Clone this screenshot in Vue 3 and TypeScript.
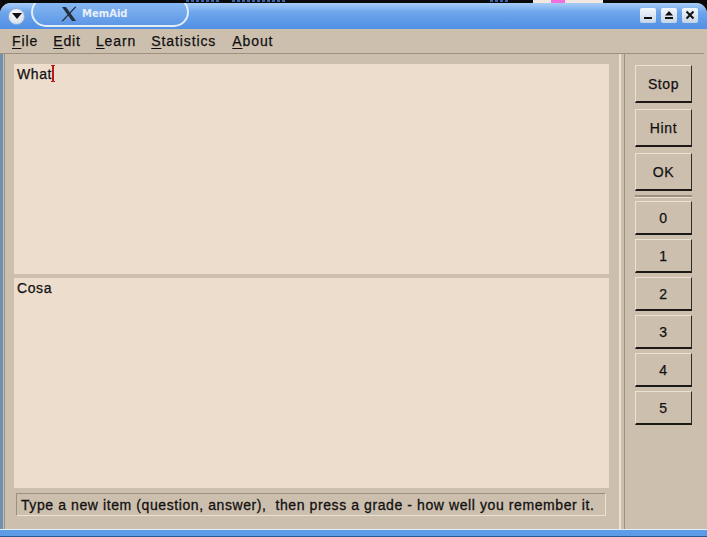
<script setup lang="ts">
const menus = [
  { key: "F", rest: "ile" },
  { key: "E", rest: "dit" },
  { key: "L", rest: "earn" },
  { key: "S", rest: "tatistics" },
  { key: "A", rest: "bout" },
];
const actions = ["Stop", "Hint", "OK"];
const grades = ["0", "1", "2", "3", "4", "5"];
</script>

<template>
  <div class="desktop">
    <div class="strip">
      <span class="strip-bits first"></span>
      <span class="strip-bits second"></span>
      <span class="strip-bits third"></span>
      <span class="strip-light"><i class="pink"></i></span>
    </div>
    <div class="window">
      <div class="titlebar">
        <button class="menu-ball">
          <svg viewBox="0 0 10 6" width="10" height="6"><path d="M0 0h10L5 6z" fill="#111" /></svg>
        </button>
        <div class="title-tab">
          <svg class="x-logo" viewBox="0 0 16 16" width="16" height="16">
            <path d="M1 1h4l10 14h-4z" fill="#26303c" />
            <path d="M14 1h1L2 15H1z" fill="#26303c" stroke="#26303c" stroke-width="0.7" />
          </svg>
          <span class="title-text">MemAid</span>
        </div>
        <div class="win-buttons">
          <button class="win-btn">
            <svg viewBox="0 0 10 10" width="10" height="10"><path d="M1 7h8v2H1z" fill="#111" /></svg>
          </button>
          <button class="win-btn">
            <svg viewBox="0 0 10 10" width="10" height="10"><path d="M5 1l4 4.5H1zM1 7h8v2H1z" fill="#111" /></svg>
          </button>
          <button class="win-btn">
            <svg viewBox="0 0 10 10" width="10" height="10"><path d="M1.5 1.5l7 7M8.5 1.5l-7 7" stroke="#111" stroke-width="2" /></svg>
          </button>
        </div>
      </div>

      <div class="menubar">
        <span v-for="m in menus" :key="m.key" class="menu-item"><u>{{ m.key }}</u>{{ m.rest }}</span>
      </div>

      <div class="body">
        <div class="main-panel">
          <div class="pane">What<span class="caret"></span></div>
          <div class="pane">Cosa</div>
          <div class="status">Type a new item (question, answer),&nbsp; then press a grade - how well you remember it.</div>
        </div>
        <div class="side-panel">
          <button v-for="a in actions" :key="a" class="btn action">{{ a }}</button>
          <div class="side-sep"></div>
          <button v-for="g in grades" :key="g" class="btn grade">{{ g }}</button>
        </div>
      </div>

      <div class="bottom-bar"></div>
    </div>
  </div>
</template>

<style scoped>
.desktop {
  position: relative;
  width: 707px;
  height: 537px;
  overflow: hidden;
  background: #0a0a0a;
  font-family: "Liberation Sans", Arial, sans-serif;
}

.strip {
  position: absolute;
  top: 0;
  left: 0;
  width: 707px;
  height: 4px;
  overflow: hidden;
}

.strip-bits {
  position: absolute;
  top: 0;
  height: 2px;
  background: repeating-linear-gradient(90deg, #3a62a8 0 3px, #0a0a0a 3px 5px);
}

.strip-bits.first { left: 186px; width: 34px; }
.strip-bits.second { left: 232px; width: 54px; }
.strip-bits.third { left: 490px; width: 20px; }

.strip-light {
  position: absolute;
  left: 533px;
  top: 0;
  width: 70px;
  height: 4px;
  background: #f0e8e0;
}

.pink {
  position: absolute;
  left: 18px;
  top: 0;
  width: 14px;
  height: 4px;
  background: #f070e0;
}

.window {
  position: absolute;
  top: 3px;
  left: 0;
  width: 707px;
  height: 534px;
  display: flex;
  flex-direction: column;
  background: #cdbfae;
  border-radius: 11px 11px 0 0;
  overflow: hidden;
}

.titlebar {
  height: 26px;
  flex-shrink: 0;
  display: flex;
  align-items: center;
  padding: 0 3px 0 8px;
  background: linear-gradient(#a7cdf6, #6ea5ec 35%, #4f8fe4);
}

.menu-ball {
  width: 17px;
  height: 17px;
  padding: 0;
  border: 1px solid #8fb0d8;
  border-radius: 50%;
  background: radial-gradient(circle at 40% 35%, #ffffff, #c8d4e4);
  display: flex;
  align-items: center;
  justify-content: center;
}

.title-tab {
  position: absolute;
  left: 31px;
  top: -6px;
  width: 158px;
  height: 30px;
  box-sizing: border-box;
  padding: 3px 0 0 28px;
  display: flex;
  align-items: center;
  gap: 5px;
  border: 2px solid #e4eefa;
  border-radius: 15px;
  background: linear-gradient(#8cbcf2, #5d97e6);
}

.x-logo {
  flex-shrink: 0;
}

.title-text {
  color: #e8f0fa;
  font-family: "DejaVu Sans", sans-serif;
  font-size: 10px;
  font-weight: bold;
}

.win-buttons {
  margin-left: auto;
  margin-top: -2px;
  display: flex;
  gap: 5px;
  margin-right: 6px;
}

.win-btn {
  width: 16px;
  height: 15px;
  padding: 0;
  border: none;
  border-radius: 2px;
  background: linear-gradient(#f4f7fb, #c4d4e8);
  display: flex;
  align-items: center;
  justify-content: center;
}

.menubar {
  height: 25px;
  flex-shrink: 0;
  box-sizing: border-box;
  display: flex;
  align-items: center;
  gap: 15px;
  padding: 0 0 0 12px;
  border-bottom: 1px solid #9c9080;
  margin-right: 3px;
  font-size: 14px;
  letter-spacing: 0.9px;
  color: #111;
  -webkit-text-stroke: 0.25px #111;
}

.menu-item u {
  text-underline-offset: 2px;
}

.menu-item:last-child {
  margin-left: 1px;
}

.body {
  flex: 1;
  min-height: 0;
  display: flex;
  padding: 0 3px 0 4px;
  box-shadow: inset 3px 0 0 #6e8fb4;
}

.main-panel {
  width: 617px;
  box-sizing: border-box;
  display: flex;
  flex-direction: column;
  gap: 4px;
  padding: 10px 0 0 9px;
  border-left: 1px solid #9c9080;
  border-right: 2px solid #ece2d2;
}

.pane {
  width: 595px;
  height: 210px;
  flex-shrink: 0;
  box-sizing: border-box;
  padding: 1px 3px;
  background: #ecddcd;
  font-size: 14px;
  line-height: 17px;
  letter-spacing: 0.6px;
  color: #111;
  -webkit-text-stroke: 0.25px #111;
}

.pane + .pane {
  padding-top: 2px;
}

.caret {
  display: inline-block;
  width: 4px;
  height: 15px;
  margin-left: -1px;
  vertical-align: -3px;
  border: solid #c01818;
  border-width: 1px 0;
  background: linear-gradient(#c01818, #c01818) center / 2px 100% no-repeat;
}

.status {
  width: 590px;
  height: 23px;
  margin: 1px 0 0 2px;
  box-sizing: border-box;
  padding-left: 4px;
  line-height: 22px;
  border: 1px solid;
  border-color: #9c9080 #ece2d2 #ece2d2 #9c9080;
  font-size: 14px;
  letter-spacing: 0.59px;
  white-space: nowrap;
  color: #111;
  -webkit-text-stroke: 0.3px #111;
}

.side-panel {
  flex: 1;
  display: flex;
  flex-direction: column;
  align-items: flex-start;
  margin-left: 3px;
  padding: 11px 0 0 10px;
  border-left: 1px solid #9c9080;
}

.btn {
  width: 57px;
  padding: 0;
  box-sizing: border-box;
  border: 1px solid;
  border-width: 1px 1px 2px 1px;
  border-color: #ece2d2 #2e2a26 #1c1a18 #ece2d2;
  background: #cdbfae;
  color: #111;
  font-family: "Liberation Sans", Arial, sans-serif;
  font-size: 14px;
  letter-spacing: 0.6px;
  -webkit-text-stroke: 0.25px #111;
}

.action {
  height: 38px;
  margin-bottom: 6px;
}

.grade {
  height: 34px;
  margin-bottom: 4px;
}

.side-sep {
  width: 57px;
  height: 2px;
  margin: -2px 0 3px;
  background: #9c9080;
  border-bottom: 1px solid #ece2d2;
}

.bottom-bar {
  height: 8px;
  flex-shrink: 0;
  box-sizing: border-box;
  background: #5c9ce6;
  border-top: 1px solid #e4eefa;
  border-bottom: 1px solid #2a5a94;
}
</style>
